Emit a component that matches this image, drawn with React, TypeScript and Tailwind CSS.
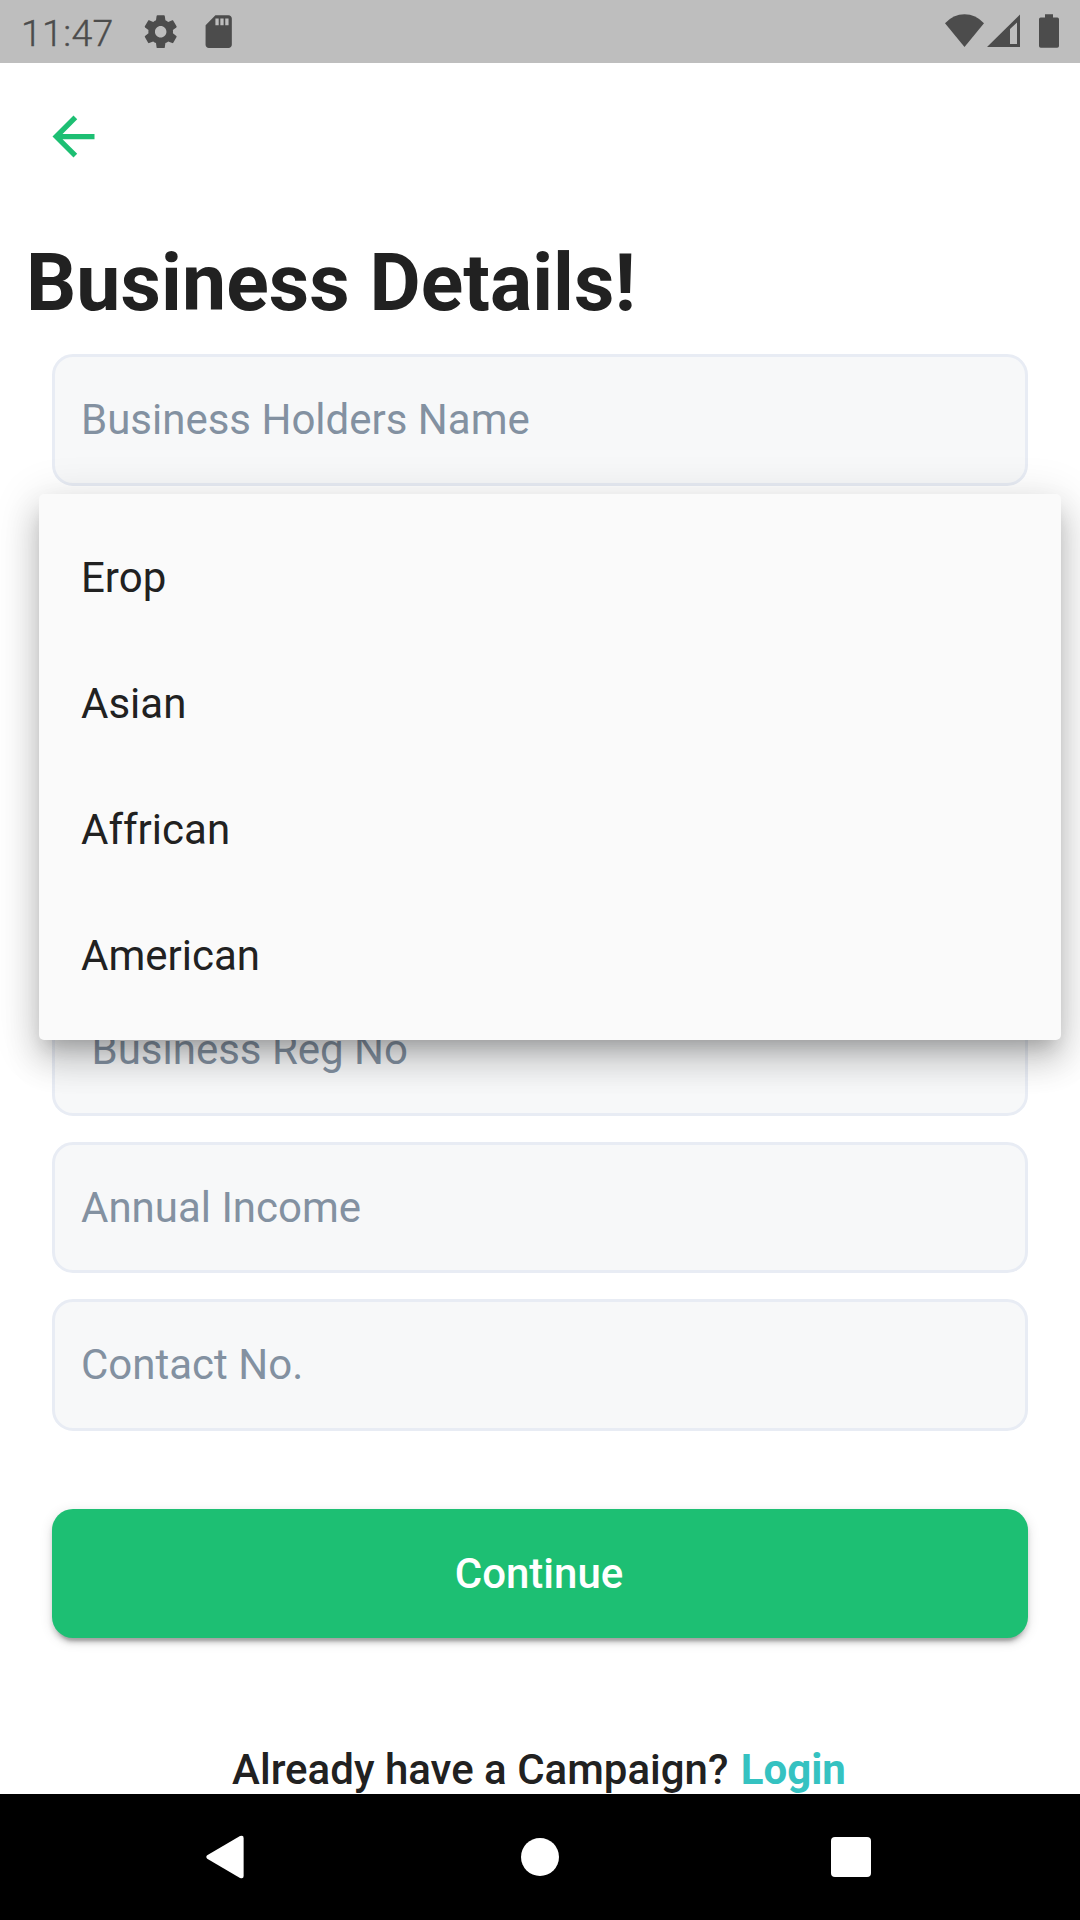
import React from "react";

type Field = { label: string; indent?: boolean };

const fields: Field[] = [
  { label: "Business Holders Name" },
  { label: "" },
  { label: "" },
  { label: "" },
  { label: "Business Reg No", indent: true },
  { label: "Annual Income" },
  { label: "Contact No." },
];

const regions = ["Erop", "Asian", "Affrican", "American"];

function StatusBar() {
  return (
    <div className="flex h-[63px] shrink-0 items-center bg-[#bebebe] pl-[21px] pr-[21px] text-[#4c4c4c]">
      <span className="w-[120px] pt-[3px] text-[37.5px] font-light leading-[63px] tracking-[0.3px] [-webkit-text-stroke:0.4px_#4c4c4c]">
        11:47
      </span>
      <svg className="h-[39.4px] w-[39.4px]" viewBox="0 0 24 24" fill="currentColor">
        <path d="M19.43 12.98c.04-.32.07-.64.07-.98s-.03-.66-.07-.98l2.11-1.65c.19-.15.24-.42.12-.64l-2-3.46c-.12-.22-.39-.3-.61-.22l-2.49 1c-.52-.4-1.08-.73-1.69-.98l-.38-2.65C14.46 2.18 14.25 2 14 2h-4c-.25 0-.46.18-.49.42l-.38 2.65c-.61.25-1.17.59-1.69.98l-2.49-1c-.23-.09-.49 0-.61.22l-2 3.46c-.13.22-.07.49.12.64l2.11 1.65c-.04.32-.07.65-.07.98s.03.66.07.98l-2.11 1.65c-.19.15-.24.42-.12.64l2 3.46c.12.22.39.3.61.22l2.49-1c.52.4 1.08.73 1.69.98l.38 2.65c.03.24.24.42.49.42h4c.25 0 .46-.18.49-.42l.38-2.65c.61-.25 1.17-.59 1.69-.98l2.49 1c.23.09.49 0 .61-.22l2-3.46c.12-.22.07-.49-.12-.64l-2.11-1.65zM12 15.5c-1.93 0-3.5-1.57-3.5-3.5s1.57-3.5 3.5-3.5 3.5 1.57 3.5 3.5-1.57 3.5-3.5 3.5z" />
      </svg>
      <svg className="ml-[18.6px] h-[39.4px] w-[39.4px]" viewBox="0 0 24 24" fill="currentColor">
        <path d="M18 2h-8L4.02 8 4 20c0 1.1.9 2 2 2h12c1.1 0 2-.9 2-2V4c0-1.1-.9-2-2-2zm-6 6h-2V4h2v4zm3 0h-2V4h2v4zm3 0h-2V4h2v4z" />
      </svg>
      <div className="ml-auto flex h-[36px] items-start">
        <svg className="h-[36px] w-[39px]" viewBox="0 0 39 36" fill="currentColor">
          <path d="M0 9.3Q8.3.3 19.5.3T39 9.3L19.5 33Z" />
        </svg>
        <svg className="ml-[3px] h-[36px] w-[33px]" viewBox="0 0 33 36" fill="currentColor">
          <path fillRule="evenodd" d="M0 33 33 0.5V33ZM23 30H30V8.5L23 15Z" />
        </svg>
        <svg className="ml-[19px] h-[36px] w-[20px]" viewBox="0 0 20 36" fill="currentColor">
          <path d="M6 0.3h8v3.2h4.3q1.7 0 1.7 1.7V32q0 1.8-1.8 1.8H1.8Q0 33.8 0 32V5.2q0-1.7 1.7-1.7H6Z" />
        </svg>
      </div>
    </div>
  );
}

function RegionMenu() {
  return (
    <ul
      role="listbox"
      className="absolute left-[39px] top-[494px] w-[1022px] rounded-[5px] bg-[#fafafa] py-[21px] shadow-[0_13px_18px_-8px_rgba(0,0,0,0.2),0_21px_33px_3px_rgba(0,0,0,0.14),0_8px_45px_5px_rgba(0,0,0,0.12)]"
    >
      {regions.map((r) => (
        <li key={r} className="flex h-[126px] items-center pl-[42px] text-[42px] leading-[50px] text-[#212121]">
          {r}
        </li>
      ))}
    </ul>
  );
}

function NavBar() {
  return (
    <div className="flex h-[126px] shrink-0 items-center bg-black pl-[206px]">
      <svg className="h-[44px] w-[38px]" viewBox="0 0 38 44" fill="white">
        <path d="M1.2 20.3 34 1.1Q37.6-.4 37.6 3V41Q37.6 44.4 34 42.9L1.2 23.7Q-.6 22 1.2 20.3Z" />
      </svg>
      <div className="ml-[277px] h-[38px] w-[38px] rounded-full bg-white" />
      <div className="ml-[272px] h-[40px] w-[40px] rounded-[4px] bg-white" />
    </div>
  );
}

export default function App() {
  return (
    <div className="relative flex h-[1920px] w-[1080px] flex-col overflow-hidden bg-white font-['Roboto',sans-serif]">
      <StatusBar />
      <main className="flex min-h-0 flex-1 flex-col">
        <svg className="ml-[42px] mt-[42px] h-[63px] w-[63px] shrink-0" viewBox="0 0 24 24" fill="#1dbf73">
          <path d="M20 11H7.83l5.59-5.59L12 4l-8 8 8 8 1.41-1.41L7.83 13H20v-2z" />
        </svg>
        <h1 className="ml-[26px] mt-[69px] h-[92px] text-[78.75px] font-bold leading-[92px] tracking-[0.07px] text-[#212121]">
          Business Details!
        </h1>
        <div className="mt-[25.4px] flex flex-col gap-[26.25px] px-[52px]">
          {fields.map((f, i) => (
            <div
              key={i}
              className={`flex h-[131.25px] items-center rounded-[21px] border-[3px] border-[#e8ecf4] bg-[#f7f8f9] text-[42px] leading-[50px] text-[#8391a1] ${
                f.indent ? "pl-[36.5px]" : "pl-[26px]"
              }`}
            >
              {f.label}
            </div>
          ))}
        </div>
        <button className="mx-[52px] mt-[78.75px] h-[128.6px] shrink-0 rounded-[21px] bg-[#1dbf73] pr-[2px] text-[42px] font-medium leading-[50px] text-white shadow-[0_8px_3px_-5px_rgba(0,0,0,0.2),0_5px_5px_0_rgba(0,0,0,0.14),0_3px_13px_0_rgba(0,0,0,0.12)]">
          Continue
        </button>
        <p className="mt-auto pr-[2px] text-center text-[42px] font-medium leading-[49px] text-[#212121]">
          Already have a Campaign? <span className="ml-[2px] font-bold text-[#35c2c1]">Login</span>
        </p>
      </main>
      <NavBar />
      <RegionMenu />
    </div>
  );
}
